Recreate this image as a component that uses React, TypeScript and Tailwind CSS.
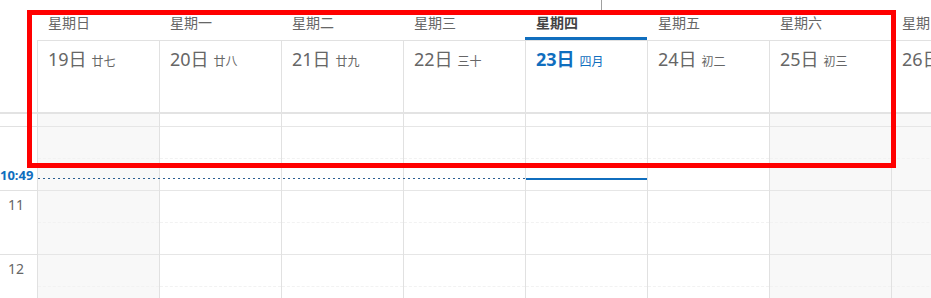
import React from 'react';

type Day = { weekday: string; date: string; lunar: string; weekend?: boolean; today?: boolean };

const days: Day[] = [
  { weekday: '星期日', date: '19日', lunar: '廿七', weekend: true },
  { weekday: '星期一', date: '20日', lunar: '廿八' },
  { weekday: '星期二', date: '21日', lunar: '廿九' },
  { weekday: '星期三', date: '22日', lunar: '三十' },
  { weekday: '星期四', date: '23日', lunar: '四月', today: true },
  { weekday: '星期五', date: '24日', lunar: '初二' },
  { weekday: '星期六', date: '25日', lunar: '初三', weekend: true },
  { weekday: '星期日', date: '26日', lunar: '初四', weekend: true },
];

const hours = ['10', '11', '12', '13'];

const App: React.FC = () => {
  return (
    <div
      className="relative w-[931px] h-[298px] overflow-hidden bg-white text-[#666]"
      style={{ fontFamily: '"Noto Sans", "Noto Sans CJK SC", sans-serif' }}
    >
      {/* header: weekday names + dates */}
      <div className="flex border-b-2 border-[#e3e3e3]">
        <div className="w-[37px] flex-none" />
        {days.map((day, i) => (
          <div key={i} className="w-[122px] flex-none flex flex-col">
            <div
              className={`h-[40px] pl-[11px] pt-[13px] text-[14px] leading-[20px] border-b-[3px] ${
                day.today ? 'border-[#106ebe] font-bold text-[#444]' : 'border-transparent'
              }`}
            >
              {day.weekday}
            </div>
            <div className="h-[72px] border-t border-l border-[#e1e1e1] pl-[10px] pt-[6px] flex items-baseline gap-[5px]">
              <span
                className={`text-[18px] leading-[24px] ${day.today ? 'font-bold text-[#106ebe]' : 'text-[#666]'}`}
              >
                {day.date}
              </span>
              <span className={`text-[12px] ${day.today ? 'text-[#106ebe]' : 'text-[#666]'}`}>{day.lunar}</span>
            </div>
          </div>
        ))}
      </div>

      {/* body: hour grid */}
      <div className="flex">
        <div className="w-[37px] flex-none flex flex-col">
          <div className="h-[12px]" />
          {hours.map((h, i) => (
            <div key={h} className="h-[64px] border-t border-[#e1e1e1] pr-[13px] pt-[4px] text-right text-[14px] leading-[20px] text-[#666]">
              {i === 0 ? '' : h}
            </div>
          ))}
        </div>
        {days.map((day, i) => (
          <div
            key={i}
            className={`w-[122px] flex-none flex flex-col border-l border-[#e1e1e1] ${
              day.weekend ? 'bg-[#f8f8f8]' : 'bg-white'
            }`}
          >
            <div className="h-[12px]" />
            {hours.map((h) => (
              <div key={h} className="h-[64px] border-t border-[#e6e6e6]">
                <div className="h-[31px]" />
                <div className="border-t border-dashed border-[#f2f2f2]" />
              </div>
            ))}
          </div>
        ))}
      </div>

      {/* current time indicator */}
      <div className="absolute left-0 top-[168px] text-[13px] font-bold leading-[15px] text-[#106ebe]">10:49</div>
      <div className="absolute left-[38px] top-[178px] w-[487px] h-px bg-[repeating-linear-gradient(90deg,#2c5f92_0_2px,transparent_2px_5px)]" />
      <div className="absolute left-[526px] top-[178px] w-[121px] h-[2px] bg-[#106ebe]" />

      {/* stray divider above */}
      <div className="absolute left-[601px] top-0 w-px h-[10px] bg-[#a0a0a0]" />

      {/* red annotation box */}
      <div className="absolute left-[27px] top-[10px] w-[869px] h-[158px] border-[5px] border-[#ff0000]" />
    </div>
  );
};

export default App;
